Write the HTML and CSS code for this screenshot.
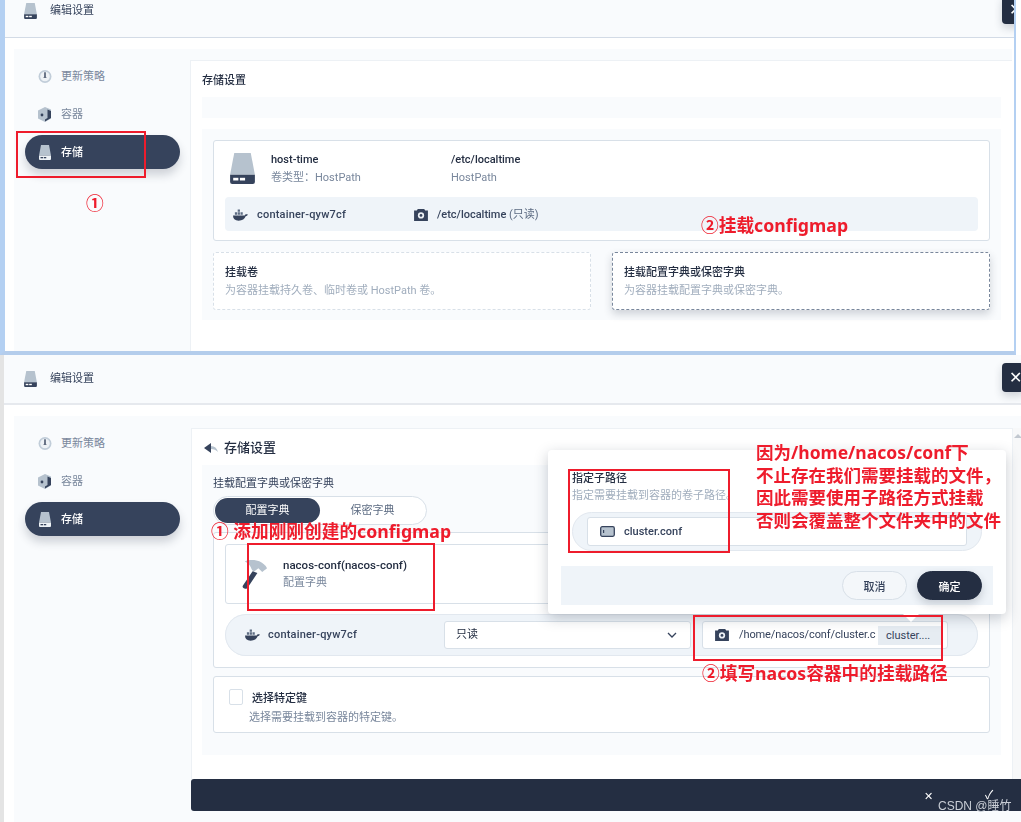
FILE: index.html
```html
<!DOCTYPE html>
<html lang="en">
<head>
    <meta charset="UTF-8">
    <meta name="viewport" content="width=device-width, initial-scale=1.0">
    <title>编辑设置</title>
    <link rel="stylesheet" href="styles.css">
</head>
<body>
    <!-- shared icons -->
    <svg class="defs" width="0" height="0">
        <symbol id="i-disk" viewBox="0 0 24 30">
            <path d="M4 0h16l4 21H0z" fill="#b6c2ce"/>
            <path d="M0 21h24v7a2 2 0 0 1-2 2H2a2 2 0 0 1-2-2z" fill="#36435c"/>
            <rect x="3" y="24" width="5" height="2.6" fill="#fff"/>
            <rect x="9.500" y="24" width="5" height="2.600" fill="#fff"/>
        </symbol>
        <symbol id="i-disk-light" viewBox="0 0 24 30">
            <path d="M4 0h16l4 21H0z" fill="#b6c2ce"/>
            <path d="M0 21h24v7a2 2 0 0 1-2 2H2a2 2 0 0 1-2-2z" fill="#eef2f6"/>
            <rect x="3" y="24" width="5" height="2.600" fill="#36435c"/>
            <rect x="9.500" y="24" width="5" height="2.600" fill="#36435c"/>
        </symbol>
        <symbol id="i-clock" viewBox="0 0 14 14">
            <circle cx="7" cy="7" r="6.500" fill="#c1cdd9"/>
            <circle cx="7" cy="7" r="4.800" fill="#eef2f6"/>
            <path d="M6.300 2.800h1.400v4.400l1.100 1H5.200l1.100-1z" fill="#36435c"/>
        </symbol>
        <symbol id="i-box" viewBox="0 0 14 15">
            <path d="M7 0l6 2.500v9L7 15l-7-3.500v-8z" fill="#b6c2ce"/>
            <path d="M9.500 2.500l3.500 1.500v7L7 14.500v-2l2.500-1.500z" fill="#36435c"/>
            <circle cx="4" cy="8" r="1.400" fill="#36435c"/>
        </symbol>
        <symbol id="i-whale" viewBox="0 0 16 12">
            <path d="M0 6.500h12.500c.4-1 1.600-1.500 3.300-1-.4 1.200-1.300 1.700-2.300 1.800C12.500 10 10 12 6 12 2 12 0 10 0 6.500z" fill="#36435c"/>
            <path d="M2 3h2.400v2.700H2zM5 3h2.400v2.700H5zM8 3h2.400v2.700H8zM5 0h2.400v2.500H5z" fill="#5c6b82"/>
        </symbol>
        <symbol id="i-mount" viewBox="0 0 15 13">
            <path d="M0 1.500h3L4 0h7l1 1.500h3V13H0z" fill="#36435c"/>
            <circle cx="7.500" cy="7" r="3.400" fill="#eef2f6"/>
            <circle cx="7.500" cy="7" r="1.500" fill="#36435c"/>
        </symbol>
        <symbol id="i-hammer" viewBox="0 0 27 33">
            <path d="M3 3c2-1.500 8-2 12-1 5 1 9 4 11 8l-5 4-4-4-5 4-2-3c-1-3-3-6-7-8z" fill="#b6c2ce"/>
            <path d="M11 13l5 2-10 15c-1 1.500-2 1.500-3.500 1S0 29.500 1 28z" fill="#36435c"/>
        </symbol>
        <symbol id="i-back" viewBox="0 0 14 10">
            <path d="M0 5l7-5v10z" fill="#36435c"/>
            <path d="M7 3c3.500 0 6 2 7 6-2-2-4-3-7-3z" fill="#b6c2ce"/>
        </symbol>
    </svg>

    <!-- first screenshot: volume list -->
    <section class="window window-top">
        <header class="head">
            <svg class="head-icon"><use href="#i-disk"/></svg>
            <span class="head-title">编辑设置</span>
            <button class="close close-top">✕</button>
        </header>
        <div class="stage">
            <aside class="side">
                <a class="nav-item"><svg class="nav-icon"><use href="#i-clock"/></svg>更新策略</a>
                <a class="nav-item"><svg class="nav-icon"><use href="#i-box"/></svg>容器</a>
                <a class="nav-item active"><svg class="nav-icon"><use href="#i-disk-light"/></svg>存储</a>
            </aside>
            <main class="main">
                <h2 class="main-title">存储设置</h2>
                <div class="bar"></div>
                <div class="panel">
                    <div class="card vol-card">
                        <div class="vol-head">
                            <svg class="vol-icon"><use href="#i-disk"/></svg>
                            <div class="vol-col">
                                <strong>host-time</strong>
                                <span>卷类型：HostPath</span>
                            </div>
                            <div class="vol-col">
                                <strong>/etc/localtime</strong>
                                <span>HostPath</span>
                            </div>
                        </div>
                        <div class="vol-row">
                            <svg class="whale"><use href="#i-whale"/></svg>
                            <span class="vol-name">container-qyw7cf</span>
                            <svg class="mount"><use href="#i-mount"/></svg>
                            <span class="vol-path">/etc/localtime <em>(只读)</em></span>
                        </div>
                    </div>
                    <div class="add-grid">
                        <div class="add-card">
                            <strong>挂载卷</strong>
                            <span>为容器挂载持久卷、临时卷或 HostPath 卷。</span>
                        </div>
                        <div class="add-card hover">
                            <strong>挂载配置字典或保密字典</strong>
                            <span>为容器挂载配置字典或保密字典。</span>
                        </div>
                    </div>
                </div>
            </main>
        </div>
    </section>

    <!-- second screenshot: mount form -->
    <section class="window window-bottom">
        <header class="head">
            <svg class="head-icon"><use href="#i-disk"/></svg>
            <span class="head-title">编辑设置</span>
            <button class="close close-bottom">✕</button>
        </header>
        <div class="stage">
            <aside class="side">
                <a class="nav-item"><svg class="nav-icon"><use href="#i-clock"/></svg>更新策略</a>
                <a class="nav-item"><svg class="nav-icon"><use href="#i-box"/></svg>容器</a>
                <a class="nav-item active"><svg class="nav-icon"><use href="#i-disk-light"/></svg>存储</a>
            </aside>
            <div class="main-wrap">
                <main class="main main-form">
                    <h2 class="main-title big"><svg class="back"><use href="#i-back"/></svg>存储设置</h2>
                    <div class="panel panel-form">
                        <div class="form-label">挂载配置字典或保密字典</div>
                        <div class="tabs">
                            <span class="tab on">配置字典</span>
                            <span class="tab">保密字典</span>
                        </div>
                        <div class="card mount-card">
                            <div class="card source">
                                <svg class="hammer"><use href="#i-hammer"/></svg>
                                <div class="vol-col">
                                    <strong>nacos-conf(nacos-conf)</strong>
                                    <span>配置字典</span>
                                </div>
                            </div>
                            <div class="mount-row">
                                <svg class="whale"><use href="#i-whale"/></svg>
                                <span class="mount-name">container-qyw7cf</span>
                                <div class="field select">只读
                                    <svg class="chevron" viewBox="0 0 10 6"><path d="M1 1l4 4 4-4" fill="none" stroke="#36435c" stroke-width="1.300"/></svg>
                                </div>
                                <div class="field path-field">
                                    <svg class="mount"><use href="#i-mount"/></svg>
                                    <span class="path-text">/home/nacos/conf/cluster.c</span>
                                    <span class="path-tag">cluster....</span>
                                </div>
                            </div>
                        </div>
                        <div class="card keys-card">
                            <div class="keys-top"><i class="check"></i><strong>选择特定键</strong></div>
                            <span>选择需要挂载到容器的特定键。</span>
                        </div>
                    </div>
                </main>
                <div class="scroll"><i></i></div>
                <footer class="foot">
                    <span class="foot-x">✕</span>
                    <span class="foot-ok">✓</span>
                </footer>
            </div>
        </div>
    </section>

    <!-- sub path popover -->
    <div class="pop">
        <strong class="pop-title">指定子路径</strong>
        <span class="pop-sub">指定需要挂载到容器的卷子路径。</span>
        <div class="pop-pill">
            <div class="field pop-input">
                <svg class="pop-icon" viewBox="0 0 15 11"><rect x=".7" y=".7" width="13.600" height="9.600" rx="1.500" fill="#b6c2ce" stroke="#36435c" stroke-width="1.300"/><rect x="3" y="4" width="1.200" height="3" fill="#36435c"/></svg>
                cluster.conf
            </div>
        </div>
        <div class="pop-foot">
            <button class="btn">取消</button>
            <button class="btn primary">确定</button>
        </div>
        <i class="pop-arrow"></i>
    </div>

    <!-- red annotations -->
    <i class="box box-nav"></i>
    <i class="box box-source"></i>
    <i class="box box-sub"></i>
    <i class="box box-path"></i>
    <span class="note note-one">①</span>
    <span class="note note-map">②挂载configmap</span>
    <span class="note note-add">① 添加刚刚创建的configmap</span>
    <span class="note note-path">②填写nacos容器中的挂载路径</span>
    <p class="note note-why">因为/home/nacos/conf下<br>不止存在我们需要挂载的文件，<br>因此需要使用子路径方式挂载<br>否则会覆盖整个文件夹中的文件</p>

    <span class="mark">CSDN @睡竹</span>
</body>
</html>
```

FILE: styles.css
```css
/* General Styles */
body {
    margin: 0;
    width: 1021px;
    height: 822px;
    position: relative;
    overflow: hidden;
    background: #fff;
    color: #36435c;
    font-family: Roboto, "Noto Sans CJK SC", sans-serif;
    font-size: 11px;
    line-height: 18px;
}
.defs {
    position: absolute;
}
strong {
    font-weight: 500;
    color: #242e42;
}
svg {
    display: block;
    flex: none;
}

/* Windows */
.window {
    box-sizing: border-box;
    display: flex;
    flex-direction: column;
    overflow: hidden;
    filter: blur(0.3px);
}
.window-top {
    width: 1016px;
    height: 355px;
    border-left: 5px solid #b4d0f2;
    border-right: 2px solid #b4d0f2;
    border-bottom: 4px solid #b4cdec;
}
.window-bottom {
    height: 467px;
    border-left: 4px solid #e4e4e4;
}
.head {
    position: relative;
    flex: none;
    display: flex;
    align-items: center;
    gap: 13px;
    box-sizing: border-box;
    padding-left: 20px;
    background: #f9fbfd;
    border-bottom: 1px solid #d3dbe6;
}
.window-top .head {
    height: 38px;
    padding-left: 19px;
    padding-bottom: 15px;
}
.window-bottom .head {
    height: 50px;
    border-bottom: 2px solid #e6e9ee;
}
.head-icon {
    width: 13px;
    height: 16px;
}
.close {
    position: absolute;
    width: 22px;
    border: none;
    padding: 0;
    background: #242e42;
    color: #fff;
    border-radius: 4px;
    font-size: 16px;
    text-align: left;
    padding-left: 7px;
    box-shadow: 0 4px 8px rgba(36, 46, 66, 0.2);
}
.close-top {
    left: 997px;
    top: -5px;
    height: 29px;
}
.close-bottom {
    left: 998px;
    top: 8px;
    height: 29px;
    line-height: 29px;
}
.stage {
    flex: 1;
    display: flex;
    min-height: 0;
    margin: 11px 0 0 10px;
    background: #f9fbfd;
}
.window-top .stage {
    margin-left: 9px;
    margin-right: 2px;
}

/* Sidebar */
.side {
    flex: none;
    width: 177px;
    box-sizing: border-box;
    padding: 10px 0 0 11px;
    display: flex;
    flex-direction: column;
    gap: 4px;
}
.window-top .side {
    width: 176px;
}
.nav-item {
    width: 155px;
    height: 34px;
    box-sizing: border-box;
    padding: 1px 0 0 13px;
    display: flex;
    align-items: center;
    gap: 9px;
    border-radius: 17px;
    color: #79879c;
}
.nav-item.active {
    background: #36435c;
    color: #fff;
    font-weight: 500;
    box-shadow: 0 6px 10px rgba(36, 46, 66, 0.2);
}
.nav-icon {
    width: 14px;
    height: 15px;
    margin-top: -1px;
}

/* Main card */
.main {
    flex: 1;
    min-width: 0;
    box-sizing: border-box;
    margin-top: 11px;
    padding: 0 11px;
    background: #fff;
    border-left: 1px solid #edf1f5;
    border-top: 1px solid #edf1f5;
}
.main-wrap {
    flex: 1;
    display: grid;
    grid-template-columns: 821px 9px;
    grid-template-rows: 363px 32px;
}
.main-form {
    margin-top: 12px;
    padding: 0 11px 0 10px;
}
.main-title {
    margin: 0;
    height: 36px;
    line-height: 40px;
    font-size: 11px;
    font-weight: 500;
    color: #242e42;
}
.main-title.big {
    display: flex;
    align-items: center;
    gap: 6px;
    padding: 1px 0 0 2px;
    box-sizing: border-box;
    font-size: 13px;
}
.back {
    width: 14px;
    height: 10px;
}
.bar {
    height: 21px;
    background: #f9fbfd;
}
.panel {
    margin-top: 11px;
    padding: 11px 11px 10px;
    background: #f9fbfd;
}
.panel-form {
    margin-top: 0;
    padding: 10px 11px 22px;
}
.card {
    box-sizing: border-box;
    background: #fff;
    border: 1px solid #d8e0e8;
    border-radius: 3px;
}

/* Volume card */
.vol-card {
    height: 101px;
    padding: 12px 11px;
}
.vol-head {
    display: flex;
    align-items: flex-start;
    height: 44px;
    padding-left: 5px;
}
.vol-icon {
    width: 25px;
    height: 31px;
    margin-right: 16px;
}
.vol-col {
    width: 180px;
    margin-top: -2px;
    display: flex;
    flex-direction: column;
    color: #79879c;
}
.vol-row {
    height: 34px;
    display: flex;
    align-items: center;
    padding: 1px 0 0 8px;
    box-sizing: border-box;
    background: #eff4f9;
    border-radius: 4px;
}
.whale {
    width: 15px;
    height: 12px;
}
.mount {
    width: 14px;
    height: 12px;
}
.vol-name {
    width: 157px;
    margin-left: 9px;
    font-weight: 500;
    letter-spacing: 0.2px;
}
.vol-path {
    margin-left: 9px;
    font-weight: 500;
}
.vol-path em {
    font-style: normal;
    font-weight: 400;
    color: #5c6b82;
}
.add-grid {
    margin-top: 11px;
    display: grid;
    grid-template-columns: 378px 378px;
    gap: 21px;
}
.add-card {
    box-sizing: border-box;
    height: 58px;
    padding: 11px;
    display: flex;
    flex-direction: column;
    background: #fff;
    border: 1px dashed #d8e0e8;
    border-radius: 3px;
    color: #a0adbd;
}
.add-card.hover {
    border-color: #79879c;
    box-shadow: 0 4px 8px rgba(36, 46, 66, 0.2);
}

/* Mount form */
.tabs {
    box-sizing: border-box;
    width: 214px;
    height: 29px;
    margin-top: 3px;
    padding: 1px;
    display: flex;
    background: #fff;
    border: 1px solid #d8e0e8;
    border-radius: 15px;
}
.tab {
    width: 105px;
    text-align: center;
    line-height: 25px;
    border-radius: 13px;
    color: #5c6b82;
}
.tab.on {
    background: #36435c;
    color: #fff;
}
.mount-card {
    height: 136px;
    margin-top: 7px;
    padding: 11px;
}
.source {
    height: 60px;
    display: flex;
    align-items: center;
    padding-left: 16px;
    gap: 15px;
}
.source .vol-col {
    margin-top: 0;
    width: 200px;
}
.source strong {
    font-size: 11.5px;
}
.hammer {
    width: 26px;
    height: 33px;
}
.mount-row {
    height: 42px;
    margin-top: 10px;
    padding-left: 20px;
    display: flex;
    align-items: center;
    background: #eff4f9;
    border-radius: 21px;
    box-shadow: inset 0 0 0 1px #e2e8ef;
}
.mount-name {
    width: 176px;
    margin-left: 8px;
    font-weight: 500;
    letter-spacing: 0.2px;
}
.field {
    box-sizing: border-box;
    height: 28px;
    display: flex;
    align-items: center;
    background: #fff;
    border: 1px solid #d8e0e8;
    border-radius: 3px;
}
.select {
    width: 247px;
    padding: 0 13px 0 11px;
    justify-content: space-between;
    color: #242e42;
}
.chevron {
    width: 10px;
    height: 6px;
}
.path-field {
    width: 246px;
    margin-left: 11px;
    padding-left: 12px;
    overflow: hidden;
}
.path-text {
    margin-left: 10px;
    width: 139px;
    flex: none;
    white-space: nowrap;
    letter-spacing: -0.1px;
    overflow: hidden;
}
.path-tag {
    height: 19px;
    padding-left: 8px;
    width: 57px;
    flex: none;
    background: #e6ecf2;
    line-height: 19px;
}
.keys-card {
    height: 57px;
    margin-top: 8px;
    padding: 12px 15px 0;
    display: flex;
    flex-direction: column;
    color: #79879c;
}
.keys-card > span {
    padding-left: 20px;
}
.keys-top {
    display: flex;
    align-items: center;
    gap: 9px;
    height: 20px;
}
.check {
    width: 14px;
    height: 16px;
    margin-top: -4px;
    box-sizing: border-box;
    background: #fff;
    border: 1px solid #d8e0e8;
    border-radius: 2px;
}
.scroll {
    margin-top: 12px;
    position: relative;
    background: #f7f8f9;
    border-left: 1px solid #edf1f5;
}
.scroll i {
    position: absolute;
    left: 1px;
    top: 6px;
    border: 4px solid transparent;
    border-top: 0;
    border-bottom: 4px solid #c2c8d0;
}
.foot {
    grid-column: 1 / 3;
    position: relative;
    background: #242e42;
    border-radius: 3px 0 0 3px;
    color: #fff;
}
.foot-x {
    position: absolute;
    left: 733px;
    top: 9px;
    font-size: 11px;
}
.foot-ok {
    position: absolute;
    left: 794px;
    top: 7px;
    font-size: 12px;
}

/* Popover */
.pop {
    position: absolute;
    left: 548px;
    top: 450px;
    width: 458px;
    height: 164px;
    box-sizing: border-box;
    padding: 19px 13px 0;
    display: flex;
    flex-direction: column;
    background: #fff;
    border-radius: 4px;
    box-shadow: 0 4px 14px rgba(36, 46, 66, 0.25);
    filter: blur(0.3px);
}
.pop-title {
    padding: 1px 0 0 11px;
}
.pop-sub {
    padding-left: 11px;
    margin-top: -1px;
    color: #a0adbd;
}
.pop-pill {
    box-sizing: border-box;
    width: 410px;
    height: 39px;
    margin: 7px 0 0 11px;
    padding: 5px 15px;
    background: #eff4f9;
    border: 1px solid #e2e8ef;
    border-radius: 20px;
}
.pop-input {
    width: 380px;
    height: 29px;
    padding-left: 12px;
    gap: 9px;
    font-weight: 500;
    margin-top: -1px;
    margin-left: -1px;
}
.pop-icon {
    width: 15px;
    height: 11px;
}
.pop-foot {
    height: 39px;
    margin-top: 15px;
    padding-right: 11px;
    display: flex;
    align-items: center;
    justify-content: flex-end;
    gap: 10px;
    background: #eff4f9;
}
.btn {
    width: 65px;
    height: 29px;
    padding: 0;
    font: 500 11px Roboto, "Noto Sans CJK SC", sans-serif;
    color: #36435c;
    background: #f4f7fa;
    border: 1px solid #d8e0e8;
    border-radius: 15px;
}
.btn.primary {
    color: #fff;
    background: #242e42;
    border-color: #242e42;
    box-shadow: 0 4px 8px rgba(36, 46, 66, 0.2);
}
.pop-arrow {
    position: absolute;
    left: 355px;
    top: 164px;
    border: 8px solid transparent;
    border-bottom: 0;
    border-top: 8px solid #fff;
}

/* Red annotations */
.box {
    position: absolute;
    box-sizing: border-box;
    border: 2px solid #ee1c2c;
}
.box-nav {
    left: 16px;
    top: 131px;
    width: 130px;
    height: 47px;
}
.box-source {
    left: 247px;
    top: 543px;
    width: 188px;
    height: 68px;
}
.box-sub {
    left: 568px;
    top: 469px;
    width: 162px;
    height: 84px;
}
.box-path {
    left: 693px;
    top: 615px;
    width: 250px;
    height: 46px;
}
.note {
    position: absolute;
    margin: 0;
    color: #ee1c2c;
    font-family: "Noto Sans", "Noto Sans CJK SC", sans-serif;
    font-weight: 700;
    font-size: 17.7px;
    line-height: 22px;
    white-space: nowrap;
}
.note-one {
    left: 86px;
    top: 192px;
}
.note-map {
    left: 701px;
    top: 214px;
}
.note-add {
    left: 211px;
    top: 520px;
}
.note-path {
    left: 702px;
    top: 662px;
}
.note-why {
    left: 756px;
    top: 441px;
    font-size: 17.5px;
    line-height: 22.6px;
}
.mark {
    position: absolute;
    left: 938px;
    top: 797px;
    color: #c9ced6;
    font-family: "Liberation Sans", "Noto Sans CJK SC", sans-serif;
    font-size: 12px;
}
```
